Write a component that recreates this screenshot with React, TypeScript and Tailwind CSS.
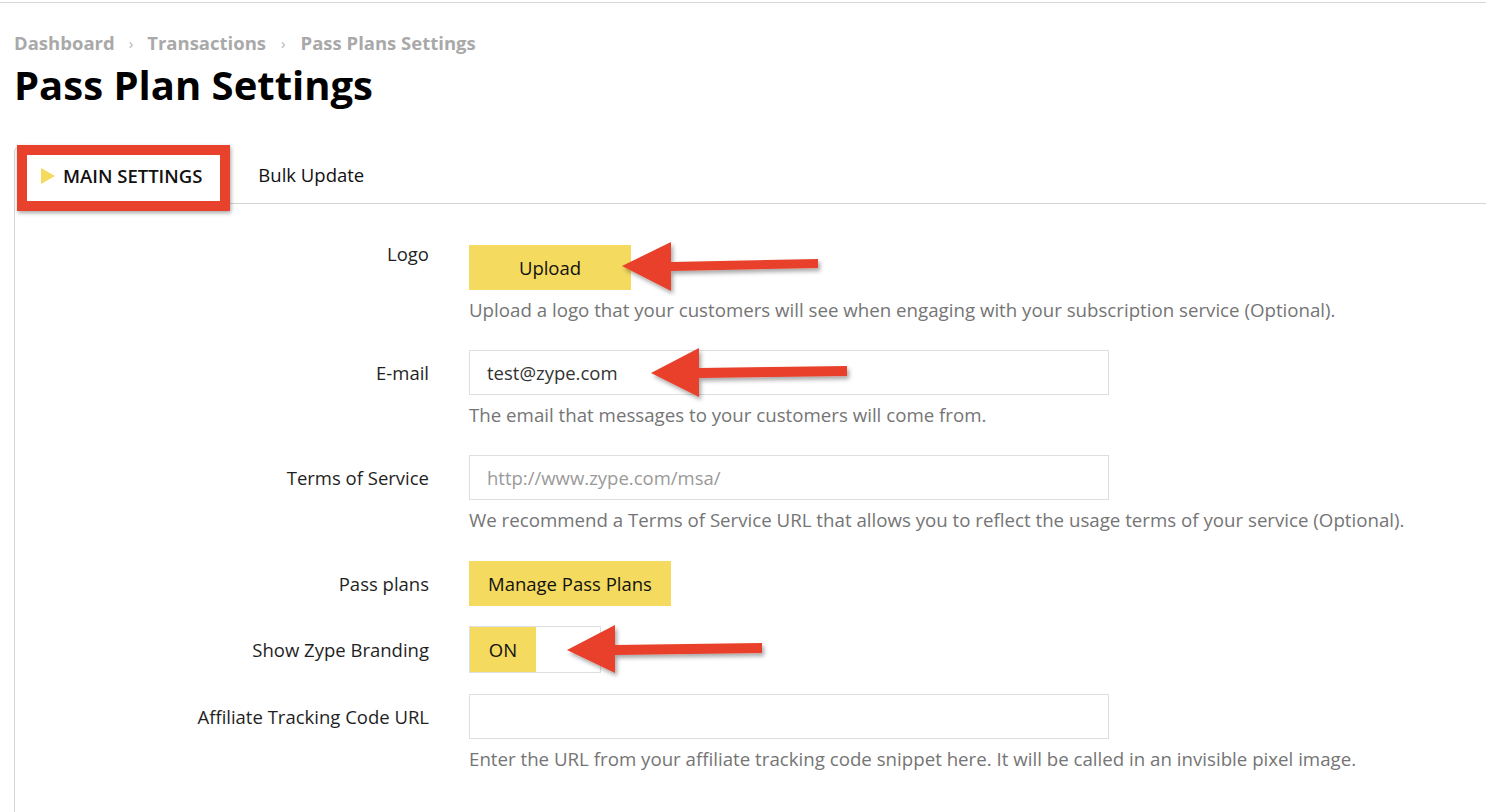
import React from "react";

const YELLOW = "bg-[#f4da5f]";

function Field({
  label,
  labelClass,
  className,
  children,
}: {
  label: string;
  labelClass?: string;
  className?: string;
  children: React.ReactNode;
}) {
  return (
    <div className={`grid grid-cols-[414px_1fr] gap-x-[40px] ${className ?? ""}`}>
      <div className={`text-right text-[18.5px] text-[#1f1f1f] ${labelClass ?? "leading-[45px]"}`}>
        {label}
      </div>
      <div className="flex flex-col items-start">{children}</div>
    </div>
  );
}

function Help({ children }: { children: React.ReactNode }) {
  return <p className="mt-[8px] text-[18.7px] leading-[24px] text-[#757575]">{children}</p>;
}

function TextInput({ value, placeholder }: { value?: string; placeholder?: string }) {
  return (
    <input
      readOnly
      value={value ?? ""}
      placeholder={placeholder}
      className="h-[45px] w-[640px] border border-[#dedede] bg-white px-[17px] text-[18.5px] text-[#333] outline-none placeholder:text-[#9a9a9a]"
    />
  );
}

function Arrows() {
  return (
    <svg
      className="pointer-events-none absolute left-0 top-0"
      width="1486"
      height="812"
      viewBox="0 0 1486 812"
    >
      <defs>
        <filter id="sh" x="-20%" y="-40%" width="140%" height="180%">
          <feDropShadow dx="2" dy="3" stdDeviation="2" floodColor="#000" floodOpacity="0.35" />
        </filter>
      </defs>
      <g fill="#e8402a" filter="url(#sh)">
        <path d="M622 266 L671 242 L671 262 L818 259 L818 268 L671 271 L671 291 Z" />
        <path d="M651 373 L699 348 L699 368 L847 366 L847 376 L699 378 L699 397 Z" />
        <path d="M567 650 L615 625 L615 645 L762 643 L762 653 L615 655 L615 673 Z" />
      </g>
    </svg>
  );
}

export default function App() {
  return (
    <div className="relative min-h-screen overflow-hidden bg-white font-['Open_Sans',sans-serif]">
      <div className="h-[2px]" />
      <div className="border-t border-[#d6d6d6]" />
      <div className="pl-[14px]">
        {/* breadcrumb */}
        <nav className="mt-[28px] flex items-center text-[18.5px] font-bold leading-[24px] text-[#a9a9a9]">
          <span>Dashboard</span>
          <span className="mx-[14px] text-[15px] font-normal text-[#b3b3b3]">›</span>
          <span>Transactions</span>
          <span className="mx-[15px] text-[15px] font-normal text-[#b3b3b3]">›</span>
          <span>Pass Plans Settings</span>
        </nav>
        <h1 className="mt-[6px] text-[40px] font-bold leading-[48px] text-black">
          Pass Plan Settings
        </h1>

        {/* tabs */}
        <div className="mt-[38px] flex h-[57px] items-stretch border-b border-[#d4d4d4]">
          <div className="-mb-px flex items-center rounded-tl-[5px] border-l border-r border-t border-[#d4d4d4] bg-white pl-[26px] pr-[26px]">
            <span className="mr-[8px] h-0 w-0 border-y-[8px] border-l-[14px] border-y-transparent border-l-[#f4da5f]" />
            <span className="text-[18.5px] font-semibold text-[#111]">MAIN SETTINGS</span>
          </div>
          <div className="flex items-center pl-[29px] text-[18.5px] text-[#111]">Bulk Update</div>
        </div>

        {/* content */}
        <div className="border-l border-[#d4d4d4] pb-[60px] pt-[41px]">
          <Field label="Logo" labelClass="leading-[18px]">
            <button className={`h-[45px] w-[162px] ${YELLOW} text-[18.5px] text-[#111]`}>Upload</button>
            <Help>
              Upload a logo that your customers will see when engaging with your subscription service
              (Optional).
            </Help>
          </Field>

          <Field label="E-mail" className="mt-[28px]">
            <TextInput value="test@zype.com" />
            <Help>The email that messages to your customers will come from.</Help>
          </Field>

          <Field label="Terms of Service" className="mt-[28px]">
            <TextInput placeholder="http://www.zype.com/msa/" />
            <Help>
              We recommend a Terms of Service URL that allows you to reflect the usage terms of your
              service (Optional).
            </Help>
          </Field>

          <Field label="Pass plans" className="mt-[29px]">
            <button className={`h-[45px] px-[19px] ${YELLOW} text-[18.5px] text-[#111]`}>
              Manage Pass Plans
            </button>
          </Field>

          <Field label="Show Zype Branding" labelClass="leading-[47px]" className="mt-[20px]">
            <div className="flex h-[47px] w-[132px] border border-[#dedede]">
              <span className={`flex w-[66px] items-center justify-center ${YELLOW} text-[18.5px] text-[#111]`}>
                ON
              </span>
            </div>
          </Field>

          <Field label="Affiliate Tracking Code URL" className="mt-[21px]">
            <TextInput />
            <Help>
              Enter the URL from your affiliate tracking code snippet here. It will be called in an
              invisible pixel image.
            </Help>
          </Field>
        </div>
      </div>

      {/* annotations */}
      <div className="pointer-events-none absolute left-[17px] top-[145px] h-[66px] w-[213px] border-[10px] border-[#e8412c] shadow-[1px_2px_4px_rgba(0,0,0,0.35)]" />
      <Arrows />
    </div>
  );
}
